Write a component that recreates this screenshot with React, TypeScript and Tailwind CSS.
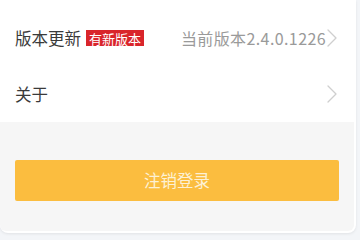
import React, { FC } from "react";

const Chevron: FC = () => (
  <svg width="12" height="20" viewBox="0 0 12 20" fill="none" className="shrink-0">
    <path d="M2 2l8 8-8 8" stroke="#cfcfcf" strokeWidth="1.3" strokeLinecap="round" strokeLinejoin="round" />
  </svg>
);

const App: FC = () => {
  return (
    <div
      className="h-[240px] w-[360px] bg-[#f3f5f8]"
      style={{ fontFamily: '"Noto Sans CJK SC", "Noto Sans", sans-serif' }}
    >
      <div className="w-[356px] overflow-hidden rounded-b-lg bg-white pb-[2px] pr-[2px] shadow-[0_1px_3px_rgba(0,0,0,0.08)]">
        <div className="pt-[10px]">
          <div className="flex h-[56px] items-center pl-[15px] pr-[16px]">
            <span className="text-[16.5px] text-[#3a3a3a]">版本更新</span>
            <span className="ml-[5px] flex h-[16px] items-center bg-[#d9252b] px-[3px] text-[13px] leading-none text-white">
              有新版本
            </span>
            <span className="ml-auto text-[16px] tracking-[0.4px] text-[#9a9a9a]">当前版本2.4.0.1226</span>
            <Chevron />
          </div>
          <div className="flex h-[56px] items-center pl-[15px] pr-[16px]">
            <span className="text-[16.5px] text-[#3a3a3a]">关于</span>
            <span className="ml-auto">
              <Chevron />
            </span>
          </div>
        </div>
        <div className="rounded-b-md bg-[#f6f6f6] px-[15px] pb-[30px] pt-[38px]">
          <button className="flex h-[41px] w-full items-center justify-center rounded-[2px] bg-[#fbbd3f] text-[16.5px] text-[#fdf1d4]">
            注销登录
          </button>
        </div>
      </div>
    </div>
  );
};

export default App;
